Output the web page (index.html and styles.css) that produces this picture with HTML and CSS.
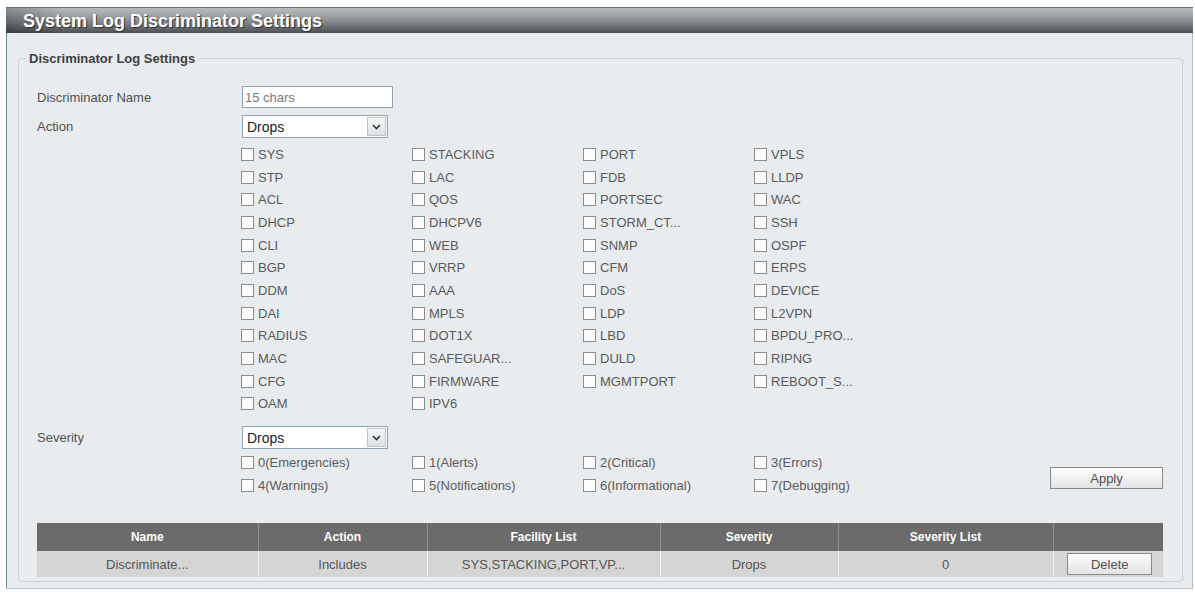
FILE: index.html
```html
<!DOCTYPE html>
<html>
<head>
  <title>System Log Discriminator Settings</title>
  <link rel="stylesheet" href="styles.css">
</head>
<body>
  <div class="window">
    <div class="title-bar">System Log Discriminator Settings</div>
    <div class="panel">
      <fieldset class="group">
        <legend>Discriminator Log Settings</legend>

        <div class="field-row name-row">
          <label class="field-label" for="disc-name">Discriminator Name</label>
          <input id="disc-name" class="text-input" type="text" placeholder="15 chars">
        </div>

        <div class="field-row action-row">
          <span class="field-label">Action</span>
          <div class="select-box">
            <span class="select-value">Drops</span>
            <span class="select-arrow">
              <svg width="9" height="6" viewBox="0 0 9 6"><path d="M1 1 L4.5 4.5 L8 1" fill="none" stroke="#333" stroke-width="1.6"/></svg>
            </span>
          </div>
        </div>

        <div class="check-grid facility-grid">
          <label class="check"><input type="checkbox">SYS</label>
          <label class="check"><input type="checkbox">STACKING</label>
          <label class="check"><input type="checkbox">PORT</label>
          <label class="check"><input type="checkbox">VPLS</label>

          <label class="check"><input type="checkbox">STP</label>
          <label class="check"><input type="checkbox">LAC</label>
          <label class="check"><input type="checkbox">FDB</label>
          <label class="check"><input type="checkbox">LLDP</label>

          <label class="check"><input type="checkbox">ACL</label>
          <label class="check"><input type="checkbox">QOS</label>
          <label class="check"><input type="checkbox">PORTSEC</label>
          <label class="check"><input type="checkbox">WAC</label>

          <label class="check"><input type="checkbox">DHCP</label>
          <label class="check"><input type="checkbox">DHCPV6</label>
          <label class="check"><input type="checkbox">STORM_CT...</label>
          <label class="check"><input type="checkbox">SSH</label>

          <label class="check"><input type="checkbox">CLI</label>
          <label class="check"><input type="checkbox">WEB</label>
          <label class="check"><input type="checkbox">SNMP</label>
          <label class="check"><input type="checkbox">OSPF</label>

          <label class="check"><input type="checkbox">BGP</label>
          <label class="check"><input type="checkbox">VRRP</label>
          <label class="check"><input type="checkbox">CFM</label>
          <label class="check"><input type="checkbox">ERPS</label>

          <label class="check"><input type="checkbox">DDM</label>
          <label class="check"><input type="checkbox">AAA</label>
          <label class="check"><input type="checkbox">DoS</label>
          <label class="check"><input type="checkbox">DEVICE</label>

          <label class="check"><input type="checkbox">DAI</label>
          <label class="check"><input type="checkbox">MPLS</label>
          <label class="check"><input type="checkbox">LDP</label>
          <label class="check"><input type="checkbox">L2VPN</label>

          <label class="check"><input type="checkbox">RADIUS</label>
          <label class="check"><input type="checkbox">DOT1X</label>
          <label class="check"><input type="checkbox">LBD</label>
          <label class="check"><input type="checkbox">BPDU_PRO...</label>

          <label class="check"><input type="checkbox">MAC</label>
          <label class="check"><input type="checkbox">SAFEGUAR...</label>
          <label class="check"><input type="checkbox">DULD</label>
          <label class="check"><input type="checkbox">RIPNG</label>

          <label class="check"><input type="checkbox">CFG</label>
          <label class="check"><input type="checkbox">FIRMWARE</label>
          <label class="check"><input type="checkbox">MGMTPORT</label>
          <label class="check"><input type="checkbox">REBOOT_S...</label>

          <label class="check"><input type="checkbox">OAM</label>
          <label class="check"><input type="checkbox">IPV6</label>
        </div>

        <div class="field-row severity-row">
          <span class="field-label">Severity</span>
          <div class="select-box">
            <span class="select-value">Drops</span>
            <span class="select-arrow">
              <svg width="9" height="6" viewBox="0 0 9 6"><path d="M1 1 L4.5 4.5 L8 1" fill="none" stroke="#333" stroke-width="1.6"/></svg>
            </span>
          </div>
        </div>

        <div class="severity-block">
          <div class="check-grid severity-grid">
            <label class="check"><input type="checkbox">0(Emergencies)</label>
            <label class="check"><input type="checkbox">1(Alerts)</label>
            <label class="check"><input type="checkbox">2(Critical)</label>
            <label class="check"><input type="checkbox">3(Errors)</label>
            <label class="check"><input type="checkbox">4(Warnings)</label>
            <label class="check"><input type="checkbox">5(Notifications)</label>
            <label class="check"><input type="checkbox">6(Informational)</label>
            <label class="check"><input type="checkbox">7(Debugging)</label>
          </div>
          <button class="btn apply-btn" type="button">Apply</button>
        </div>

        <table class="log-table">
          <thead>
            <tr>
              <th class="col-name">Name</th>
              <th class="col-action">Action</th>
              <th class="col-facility">Facility List</th>
              <th class="col-severity">Severity</th>
              <th class="col-sevlist">Severity List</th>
              <th class="col-btn"></th>
            </tr>
          </thead>
          <tbody>
            <tr>
              <td>Discriminate...</td>
              <td>Includes</td>
              <td>SYS,STACKING,PORT,VP...</td>
              <td>Drops</td>
              <td>0</td>
              <td><button class="btn delete-btn" type="button">Delete</button></td>
            </tr>
          </tbody>
        </table>
      </fieldset>
    </div>
  </div>
</body>
</html>
```

FILE: styles.css
```css
* {
  box-sizing: border-box;
}

body {
  margin: 0;
  background-color: #fff;
  font-family: "Liberation Sans", Arial, sans-serif;
  font-size: 13px;
  color: #555;
}

.window {
  margin: 7px 2px 0 6px;
}

.title-bar {
  height: 26px;
  line-height: 26px;
  padding-left: 17px;
  font-size: 18px;
  font-weight: bold;
  color: #fff;
  text-shadow: 1px 1px 1px #2e3133;
  border-top: 1px solid #6c7074;
  background:
    linear-gradient(to right, rgba(0, 0, 0, 0.25) 0, rgba(0, 0, 0, 0) 60px),
    linear-gradient(to bottom, #b8bcbf 0%, #a8acaf 20%, #8b8f93 50%, #65696d 80%, #4c5053 100%);
}

.panel {
  background-color: #e8ecee;
  border-left: 1px solid #6f8a94;
  border-right: 1px solid #b3bec3;
  border-bottom: 1px solid #c2cacd;
  padding: 18px 9px 6px 11px;
}

.group {
  margin: 0;
  padding: 0 19px 4px 18px;
  border: 1px solid #cbd2d5;
  border-radius: 4px;
}

.group legend {
  margin-left: -11px;
  padding: 0 3px;
  font-size: 13px;
  font-weight: bold;
  line-height: 15px;
  color: #3f3f3f;
}

.field-row {
  display: flex;
  align-items: center;
}

.field-label {
  width: 205px;
  color: #505050;
}

.name-row {
  margin-top: 20px;
}

.action-row {
  margin-top: 7px;
}

.text-input {
  width: 151px;
  height: 22px;
  padding: 0 2px;
  border: 1px solid #8ea3b3;
  background-color: #fff;
  font-family: inherit;
  font-size: 13px;
  outline: none;
}

.text-input::placeholder {
  color: #7a7a7a;
}

.select-box {
  display: flex;
  align-items: center;
  width: 146px;
  height: 23px;
  padding: 1px;
  border: 1px solid #8ea3b3;
  background-color: #fff;
}

.select-value {
  flex: 1;
  padding-left: 3px;
  font-size: 14px;
  color: #222;
}

.select-arrow {
  display: flex;
  align-items: center;
  justify-content: center;
  width: 19px;
  height: 19px;
  border: 1px solid #b9c5cd;
  background: linear-gradient(to bottom, #f6f7f8, #dde2e5);
}

.check-grid {
  display: grid;
  grid-template-columns: repeat(4, 171px);
  margin-left: 204px;
}

.facility-grid {
  margin-top: 5px;
  grid-auto-rows: 22.7px;
}

.check {
  display: flex;
  align-items: center;
  color: #5a5a5a;
  white-space: nowrap;
}

.check input {
  appearance: none;
  -webkit-appearance: none;
  width: 13px;
  height: 13px;
  margin: 0 4px 0 0;
  border: 1px solid #8c8c8c;
  background-color: #fbfbfb;
}

.severity-row {
  margin-top: 11px;
}

.severity-block {
  display: flex;
  margin-top: 2px;
}

.severity-grid {
  grid-auto-rows: 23px;
}

.btn {
  height: 22px;
  padding: 0;
  border: 1px solid #8a8a8a;
  background: linear-gradient(to bottom, #fdfdfd, #e4e4e4);
  font-family: inherit;
  font-size: 13px;
  color: #505050;
}

.apply-btn {
  width: 113px;
  margin: 16px 0 0 auto;
}

.log-table {
  width: 100%;
  margin-top: 26px;
  border-collapse: collapse;
  table-layout: fixed;
}

.log-table th {
  height: 28px;
  padding: 0;
  background-color: #6b6b6b;
  color: #fff;
  font-size: 12px;
  font-weight: bold;
  text-align: center;
  border-left: 1px solid #8e8e8e;
}

.log-table td {
  height: 26px;
  padding: 0;
  background-color: #d5d5d5;
  color: #555;
  text-align: center;
  border-left: 1px solid #f0f0f0;
}

.log-table th:first-child,
.log-table td:first-child {
  border-left: none;
}

.col-name { width: 221px; }
.col-action { width: 169px; }
.col-facility { width: 233px; }
.col-severity { width: 178px; }
.col-sevlist { width: 215px; }
.col-btn { width: 110px; }

.delete-btn {
  width: 85px;
  margin-left: 3px;
}
```
